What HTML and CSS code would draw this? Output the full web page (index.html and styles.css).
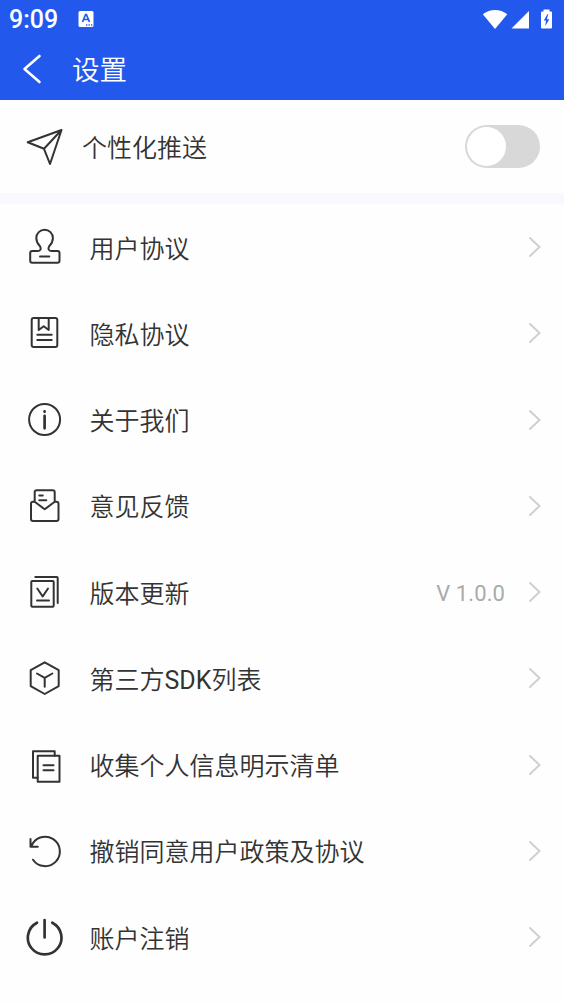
FILE: index.html
```html
<!DOCTYPE html>
<html lang="zh-CN">
<head>
    <meta charset="UTF-8">
    <meta name="viewport" content="width=device-width, initial-scale=1.0">
    <title>设置</title>
    <link rel="stylesheet" href="styles.css">
</head>
<body>
    <header class="header">
        <div class="status">
            <span class="time">9:09</span>
            <svg class="badge" width="16" height="18" viewBox="0 0 16 18">
                <rect x="0.5" y="1" width="15" height="16" rx="1.5" fill="#fff"/>
                <path d="M4.5 12 7.6 4.5h.8L11.5 12M5.8 9.5h4.5" fill="none" stroke="#2259ec" stroke-width="1.7"/>
                <path d="M8 15h1.3M10.5 15h1.3M13 15h1.3" stroke="#2259ec" stroke-width="1.3"/>
            </svg>
            <svg class="signals" width="72" height="22" viewBox="0 0 72 22" fill="#fff">
                <path d="M.8 6.2C8 .5 18.200.5 25.300 6.200L13 21z"/>
                <path d="M47 3v17.500H29.500z"/>
                <path d="M61.500 1.500h6v2h1.500a1 1 0 0 1 1 1v15a1 1 0 0 1-1 1h-9a1 1 0 0 1-1-1v-15a1 1 0 0 1 1-1h1.500z"/>
                <path d="M65.500 6 61.800 12.500h2.200L63.300 18l4-6.800h-2.400l1.300-5.200z" fill="#2259ec"/>
            </svg>
        </div>
        <div class="navbar">
            <svg class="back" width="20" height="32" viewBox="0 0 20 32"><path d="M17.500 3 2.500 16l15 13"/></svg>
            <h1>设置</h1>
        </div>
    </header>

    <section class="push">
        <svg class="icon" viewBox="0 0 40 40"><path d="M37.500 3 3.700 15.300l16.300 6.500 6 15.200zM37.500 3 20 21.800"/></svg>
        <span class="push-label">个性化推送</span>
        <span class="switch"></span>
    </section>

    <ul class="list">
        <li>
            <svg class="icon" viewBox="0 0 40 40"><path d="M8.200 24h5.300c3 0 4-2.200 2.500-4.700-2.200-2.300-3.700-5-3.700-8.300a8.300 8.300 0 0 1 16.600 0c0 3.300-1.500 6-3.700 8.300-1.500 2.500-.5 4.700 2.500 4.700h5.800a2 2 0 0 1 2 2v7.700a2 2 0 0 1-2 2H8.200a2 2 0 0 1-2-2V26a2 2 0 0 1 2-2zM16 29.500h9.300"/></svg>
            <span class="label">用户协议</span>
            <svg class="arrow" viewBox="0 0 14 22"><path d="m2 2 9.500 9L2 20"/></svg>
        </li>
        <li>
            <svg class="icon" viewBox="0 0 40 40"><rect x="7.700" y="5" width="25.600" height="29" rx="2"/><path d="M14.700 5v12l5-3.700 5 3.700V5M13.300 21.700h14.400M13.300 27h14.400"/></svg>
            <span class="label">隐私协议</span>
            <svg class="arrow" viewBox="0 0 14 22"><path d="m2 2 9.500 9L2 20"/></svg>
        </li>
        <li>
            <svg class="icon" viewBox="0 0 40 40"><circle cx="20.600" cy="19.500" r="15.500"/><path class="thick" d="M20.600 15.800v12.500M20.600 11.300v.5"/></svg>
            <span class="label">关于我们</span>
            <svg class="arrow" viewBox="0 0 14 22"><path d="m2 2 9.500 9L2 20"/></svg>
        </li>
        <li>
            <svg class="icon" viewBox="0 0 40 40"><path d="M10.700 16V6.300a2 2 0 0 1 2-2h16a2 2 0 0 1 2 2V16M10.700 15.700H9a2 2 0 0 0-2 2V33a2 2 0 0 0 2 2h23.500a2 2 0 0 0 2-2V17.700a2 2 0 0 0-2-2h-1.800l-10 7.600zM15.300 9.500h3.500M15.300 14.300h7"/></svg>
            <span class="label">意见反馈</span>
            <svg class="arrow" viewBox="0 0 14 22"><path d="m2 2 9.500 9L2 20"/></svg>
        </li>
        <li>
            <svg class="icon" viewBox="0 0 40 40"><rect x="7.300" y="8.900" width="22.400" height="25.800" rx="1"/><path d="M11.300 5h21.400a1 1 0 0 1 1 1v25M13.300 16.500l5.400 8 5.300-8M13 28.600h12"/></svg>
            <span class="label">版本更新</span>
            <span class="version">V 1.0.0</span>
            <svg class="arrow" viewBox="0 0 14 22"><path d="m2 2 9.500 9L2 20"/></svg>
        </li>
        <li>
            <svg class="icon" viewBox="0 0 40 40"><path d="m20.700 4.300 14 7.900v15.900l-14 7.900-14-7.900V12.200zM13 15.500l7.700 4.300 7.700-4.300M20.700 19.800v9"/></svg>
            <span class="label">第三方<span class="latin">SDK</span>列表</span>
            <svg class="arrow" viewBox="0 0 14 22"><path d="m2 2 9.500 9L2 20"/></svg>
        </li>
        <li>
            <svg class="icon" viewBox="0 0 40 40"><rect x="13.700" y="10.800" width="21.800" height="26"/><path d="M13.700 32.700H9V6.300h21.700v4.500M19.500 20.300h10M19.500 25.300h10"/></svg>
            <span class="label">收集个人信息明示清单</span>
            <svg class="arrow" viewBox="0 0 14 22"><path d="m2 2 9.500 9L2 20"/></svg>
        </li>
        <li>
            <svg class="icon" viewBox="0 0 40 40"><path d="M7.300 15.500A14.700 14.700 0 1 1 9 28.700M6.500 8v7.700h7.300"/></svg>
            <span class="label">撤销同意用户政策及协议</span>
            <svg class="arrow" viewBox="0 0 14 22"><path d="m2 2 9.500 9L2 20"/></svg>
        </li>
        <li>
            <svg class="icon" viewBox="0 0 40 40"><path class="thick" d="M13 5.700a16.800 16.800 0 1 0 15.300 0M20.600 3v17.500"/></svg>
            <span class="label">账户注销</span>
            <svg class="arrow" viewBox="0 0 14 22"><path d="m2 2 9.500 9L2 20"/></svg>
        </li>
    </ul>
</body>
</html>
```
FILE: styles.css
```css
* {
    box-sizing: border-box;
}
body {
    margin: 0;
    background-color: #fefefe;
    color: #333;
    font-family: Roboto, "Noto Sans CJK SC", sans-serif;
    font-size: 25px;
    font-weight: 350;
}
svg {
    flex-shrink: 0;
}
.header {
    height: 100px;
    background-color: #2259ec;
    color: #fff;
}
.status {
    display: flex;
    align-items: center;
    height: 38px;
    padding: 0 10px 0 9px;
}
.time {
    width: 69px;
    font-size: 25px;
    font-weight: 500;
    line-height: 38px;
    padding-top: 1px;
}
.signals {
    margin-left: auto;
}
.navbar {
    display: flex;
    align-items: center;
    height: 62px;
    padding-left: 22px;
}
.back {
    fill: none;
    stroke: #fff;
    stroke-width: 2.6;
    stroke-linecap: round;
    stroke-linejoin: round;
}
.navbar h1 {
    margin: 0 0 0 30px;
    padding-top: 3px;
    font-size: 27.5px;
    font-weight: 350;
    line-height: 62px;
}
.push {
    display: flex;
    align-items: center;
    height: 104px;
    padding: 0 24px;
    border-bottom: 11px solid #f8f8fe;
}
.icon {
    width: 40px;
    height: 40px;
    fill: none;
    stroke: #333;
    stroke-width: 2;
    stroke-linecap: round;
    stroke-linejoin: round;
}
.thick {
    stroke-width: 2.7;
}
.push-label {
    margin-left: 18px;
    padding-bottom: 2px;
}
.switch {
    width: 75px;
    height: 43px;
    margin-left: auto;
    padding: 2px;
    border-radius: 22px;
    background-color: #d8d8d8;
}
.switch::before {
    content: "";
    display: block;
    width: 39px;
    height: 39px;
    border-radius: 50%;
    background-color: #fff;
}
.list {
    margin: 0;
    padding: 0;
    list-style: none;
}
.list li {
    display: flex;
    align-items: center;
    height: 86.25px;
    padding: 0 22px 0 24px;
}
.label {
    flex: 1;
    margin-left: 25.5px;
    padding-bottom: 1px;
}
.latin {
    font-weight: 400;
}
.version {
    margin-right: 23px;
    padding-top: 2px;
    color: #aaa;
    font-size: 22px;
    font-weight: 400;
    letter-spacing: 0.1px;
}
.arrow {
    width: 14px;
    height: 22px;
    fill: none;
    stroke: #d0d0d4;
    stroke-width: 2;
    stroke-linecap: round;
}
```
